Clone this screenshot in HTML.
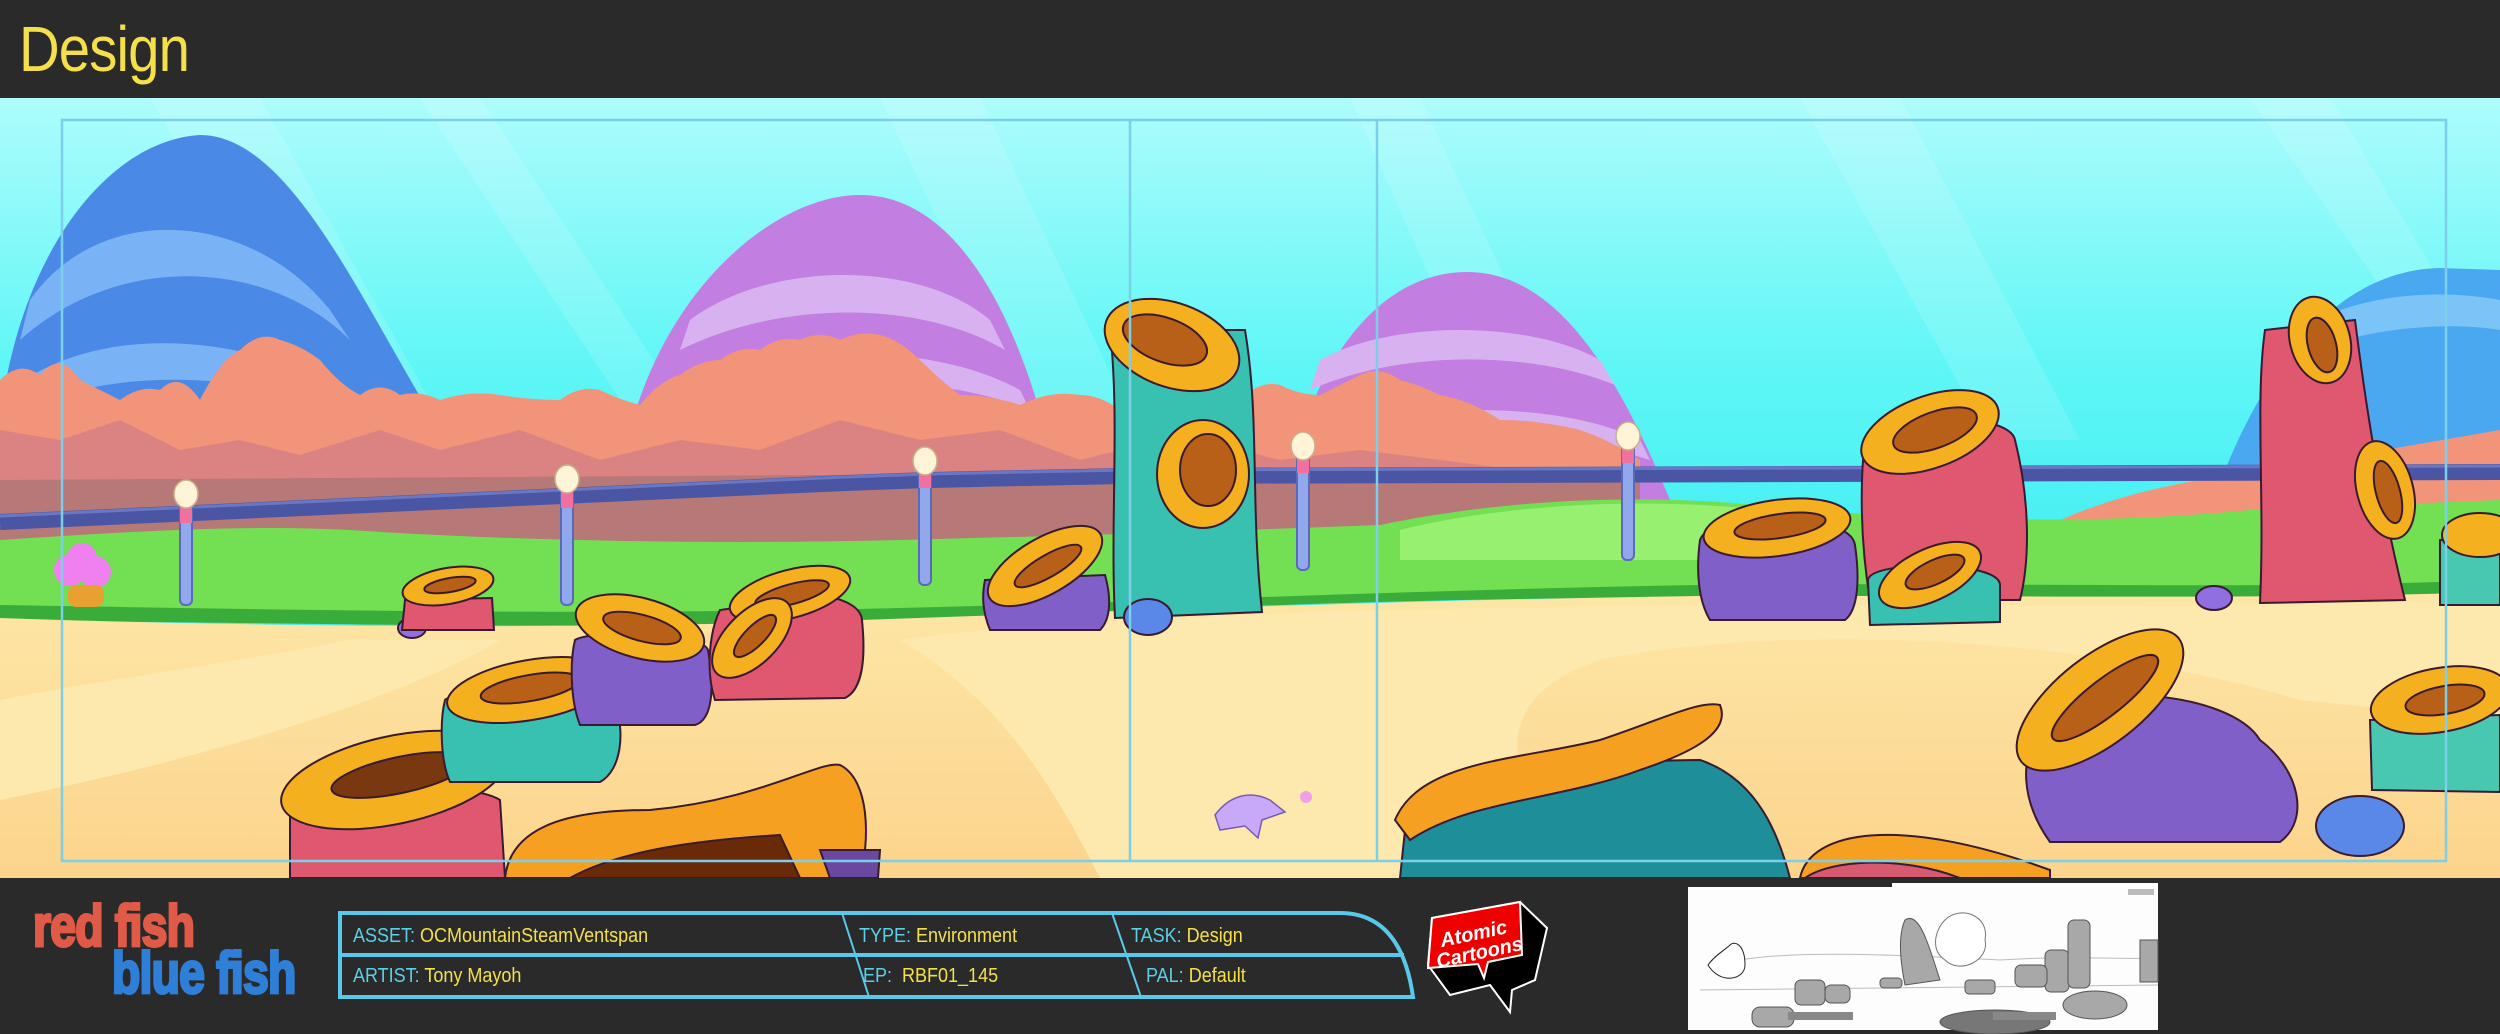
<!DOCTYPE html>
<html><head><meta charset="utf-8"><style>
html,body{margin:0;padding:0;background:#2a2a2a;}
body{width:2500px;height:1034px;position:relative;overflow:hidden;font-family:"Liberation Sans",sans-serif;}
.top{position:absolute;left:0;top:0;width:2500px;height:98px;background:#2a2a2a;}
.top span{position:absolute;left:19px;top:12px;font-size:64px;color:#f5e04a;letter-spacing:-1px;transform:scaleX(0.88);transform-origin:left;}
svg{position:absolute;left:0;}
.lbl{position:absolute;font-size:20px;color:#f5e04a;white-space:nowrap;transform:scaleX(0.9);transform-origin:left;}
.lbl b{color:#5ccfe8;font-weight:normal;}
.logo{position:absolute;font-weight:bold;font-size:58px;transform:scaleX(0.8);transform-origin:left;letter-spacing:-1px;-webkit-text-stroke:3px currentColor;}
</style></head><body>
<div class="top"><span>Design</span></div>

<svg style="top:98px" width="2500" height="780" viewBox="0 98 2500 780">
<defs>
<linearGradient id="sky" x1="0" y1="0" x2="0" y2="1">
<stop offset="0" stop-color="#aefcfc"/><stop offset="0.35" stop-color="#5ef6f6"/><stop offset="0.6" stop-color="#44eef2"/><stop offset="1" stop-color="#6cd6f0"/></linearGradient>
<linearGradient id="sand" x1="0" y1="0" x2="0" y2="1"><stop offset="0" stop-color="#fde6a6"/><stop offset="1" stop-color="#fcd48c"/></linearGradient>
</defs>
<rect x="0" y="98" width="2500" height="780" fill="url(#sky)"/>
<g fill="#ffffff" opacity="0.13">
<polygon points="150,98 260,98 520,560 420,560"/>
<polygon points="420,98 480,98 760,520 700,520"/>
<polygon points="880,98 980,98 1180,520 1080,520"/>
<polygon points="1350,98 1420,98 1600,480 1520,480"/>
<polygon points="1800,98 1900,98 2080,440 1990,440"/>
<polygon points="2250,98 2330,98 2500,380 2500,460"/>
</g>
<!-- mountains -->
<path d="M0,420 C20,250 110,140 200,135 C290,135 360,300 440,430 L0,430Z" fill="#4a8ae6"/>
<path d="M30,300 C100,200 250,210 330,310 L350,340 C270,260 120,250 20,340Z" fill="#7ab2f6"/>
<path d="M10,390 C100,320 260,330 380,410 L390,430 C270,370 110,360 0,420Z" fill="#7ab2f6"/>
<path d="M630,430 C670,280 780,195 860,195 C950,195 1010,300 1045,430Z" fill="#c27ee0"/>
<path d="M690,320 C770,260 920,260 990,320 L1005,350 C920,300 780,300 680,350Z" fill="#d8b2f0"/>
<path d="M660,395 C760,340 930,340 1020,390 L1030,410 C930,370 760,370 650,420Z" fill="#d8b2f0"/>
<path d="M1285,500 C1310,360 1380,272 1467,272 C1560,272 1620,380 1670,500Z" fill="#c27ee0"/>
<path d="M1320,360 C1390,320 1530,320 1600,360 L1615,385 C1530,350 1400,350 1310,390Z" fill="#d8b2f0"/>
<path d="M1300,440 C1400,400 1560,400 1640,440 L1650,460 C1560,430 1400,430 1295,470Z" fill="#d8b2f0"/>
<path d="M2225,470 C2270,360 2340,270 2440,268 L2500,270 L2500,470Z" fill="#4aa8f0"/>
<path d="M2300,330 C2360,290 2450,290 2500,300 L2500,330 C2440,320 2350,330 2290,360Z" fill="#7ac4f8"/>
<!-- trees -->
<path d="M0,380 Q20,360 40,375 Q60,350 80,380 Q100,390 120,400 Q140,385 160,390 Q180,370 200,400 Q220,360 240,350 Q260,330 280,340 Q300,345 320,360 Q340,385 360,395 Q380,380 400,395 Q420,390 440,400 Q470,390 500,395 Q530,400 560,400 Q580,385 600,390 Q620,400 640,405 Q660,380 680,375 Q700,360 720,360 Q740,345 760,350 Q780,335 800,340 Q820,330 840,340 Q860,330 880,335 Q900,340 920,360 Q940,380 960,395 Q990,395 1020,405 Q1050,390 1080,395 Q1100,395 1120,410 L1240,400 Q1260,380 1280,385 Q1300,395 1320,395 Q1340,385 1360,375 Q1380,365 1400,380 Q1420,385 1440,395 Q1470,400 1500,420 Q1540,420 1580,430 Q1610,440 1640,460 L1640,550 L0,560Z" fill="#f2947a"/>
<path d="M0,430 L60,440 120,420 180,450 240,440 300,455 380,430 440,450 520,430 600,460 680,440 760,450 840,420 920,440 1000,430 1080,460 1120,450 1200,440 1280,460 1360,450 1440,460 1520,470 1640,480 1640,560 0,560Z" fill="#d07c86" opacity="0.7"/>
<path d="M0,480 L1640,470 1640,560 0,565Z" fill="#b77878"/>
<path d="M2050,525 C2100,500 2180,480 2240,475 L2500,430 2500,540 2050,540Z" fill="#f2947a"/>
<!-- pipe -->
<path d="M0,522 C300,510 600,495 800,485 C950,478 1050,478 1120,476 L2500,472" stroke="#4a56a4" stroke-width="16" fill="none"/>
<path d="M0,516 C300,504 600,489 800,479 C950,472 1050,472 1120,470 L2500,466" stroke="#6a78c4" stroke-width="3" fill="none"/>
<!-- grass -->
<path d="M0,540 C150,530 250,525 350,530 C500,540 700,545 900,540 C1100,535 1250,530 1380,525 C1500,500 1650,490 1800,510 C1950,520 2100,525 2250,510 L2500,500 L2500,590 L2200,600 C1900,610 1700,590 1500,590 C1300,595 1100,610 900,615 C700,620 400,615 200,615 L0,612Z" fill="#72e052"/>
<path d="M1400,530 C1500,505 1650,495 1780,512 L1780,560 1400,560Z" fill="#98f070"/>
<path d="M0,605 C200,608 500,615 800,610 C1100,605 1400,590 1700,585 C2000,582 2250,590 2500,580 L2500,600 C2200,605 1900,600 1600,598 C1300,600 1000,618 700,625 C400,628 200,620 0,622Z" fill="#3aac3a"/>
<!-- sand -->
<path d="M0,618 C200,625 500,630 800,622 C1100,612 1400,600 1700,596 C2000,595 2250,600 2500,592 L2500,878 L0,878Z" fill="url(#sand)"/>
<path d="M900,640 C1000,700 1050,780 1100,878 L1600,878 C1500,790 1480,700 1600,660 C1800,620 2100,640 2300,700 L2500,720 L2500,600 C2200,610 1800,600 1400,610 C1200,615 1000,625 900,640Z" fill="#fde9ad"/>
<path d="M0,700 C100,680 250,660 350,640 L500,640 C400,700 200,760 0,800Z" fill="#fde9ad"/>
<!-- posts -->
<g fill="#92a8ec" stroke="#5a6ab8" stroke-width="2">
<rect x="180" y="505" width="12" height="100" rx="5"/><rect x="561" y="490" width="12" height="115" rx="5"/><rect x="919" y="470" width="12" height="115" rx="5"/><rect x="1297" y="455" width="12" height="115" rx="5"/><rect x="1622" y="445" width="12" height="115" rx="5"/>
</g>
<g fill="#f070a0"><rect x="180" y="505" width="12" height="18"/><rect x="561" y="490" width="12" height="18"/><rect x="919" y="470" width="12" height="18"/><rect x="1297" y="455" width="12" height="18"/><rect x="1622" y="445" width="12" height="18"/></g>
<g fill="#fff4d8" stroke="#c8b088" stroke-width="1.5">
<ellipse cx="186" cy="494" rx="12" ry="14"/><ellipse cx="567" cy="479" rx="12" ry="14"/><ellipse cx="925" cy="461" rx="12" ry="14"/><ellipse cx="1303" cy="446" rx="12" ry="14"/><ellipse cx="1628" cy="436" rx="12" ry="14"/>
</g>
<!-- flower -->
<g fill="#f080f0"><circle cx="70" cy="570" r="16"/><circle cx="95" cy="572" r="16"/><circle cx="82" cy="558" r="15"/></g>
<rect x="68" y="585" width="36" height="22" rx="8" fill="#e8a030"/>
<!-- corals -->
<g stroke="#3a1a30" stroke-width="2">
<path d="M1110,330 L1245,330 C1260,420 1250,500 1262,612 L1115,618 C1110,520 1120,420 1110,330Z" fill="#38c0b0"/>
<ellipse cx="1172" cy="345" rx="70" ry="42" transform="rotate(20 1172 345)" fill="#f5b020"/>
<ellipse cx="1165" cy="340" rx="44" ry="22" transform="rotate(20 1165 340)" fill="#b86018"/>
<ellipse cx="1203" cy="474" rx="46" ry="54" fill="#f5b020"/>
<ellipse cx="1208" cy="470" rx="28" ry="36" fill="#b86018"/>
<path d="M2265,330 L2355,320 C2365,400 2380,500 2405,600 L2260,603 C2265,500 2255,400 2265,330Z" fill="#e05870"/>
<ellipse cx="2320" cy="340" rx="30" ry="44" transform="rotate(-15 2320 340)" fill="#f5b020"/>
<ellipse cx="2322" cy="345" rx="14" ry="28" transform="rotate(-15 2322 345)" fill="#b86018"/>
<ellipse cx="2385" cy="490" rx="28" ry="50" transform="rotate(-15 2385 490)" fill="#f5b020"/>
<ellipse cx="2388" cy="492" rx="12" ry="32" transform="rotate(-15 2388 492)" fill="#b86018"/>
<path d="M1865,440 C1870,410 2010,410 2015,440 C2030,500 2030,560 2020,600 L1870,600 C1860,540 1860,480 1865,440Z" fill="#e05870"/>
<ellipse cx="1930" cy="432" rx="72" ry="36" transform="rotate(-20 1930 432)" fill="#f5b020"/>
<ellipse cx="1935" cy="430" rx="44" ry="18" transform="rotate(-20 1935 430)" fill="#b86018"/>
<path d="M1700,540 C1710,510 1850,510 1855,545 C1860,580 1858,610 1845,620 L1710,620 C1698,600 1696,570 1700,540Z" fill="#8060c8"/>
<ellipse cx="1777" cy="528" rx="74" ry="28" transform="rotate(-8 1777 528)" fill="#f5b020"/>
<ellipse cx="1780" cy="526" rx="46" ry="12" transform="rotate(-8 1780 526)" fill="#b86018"/>
<path d="M1868,580 C1870,560 2000,560 2000,585 L2000,622 L1870,625Z" fill="#38c0b0"/>
<ellipse cx="1930" cy="575" rx="55" ry="26" transform="rotate(-25 1930 575)" fill="#f5b020"/>
<ellipse cx="1935" cy="572" rx="32" ry="12" transform="rotate(-25 1935 572)" fill="#b86018"/>
<path d="M2040,720 C2080,680 2230,690 2260,740 C2300,770 2310,820 2280,842 L2050,842 C2020,800 2020,760 2040,720Z" fill="#8060c8"/>
<ellipse cx="2100" cy="700" rx="100" ry="44" transform="rotate(-38 2100 700)" fill="#f5b020"/>
<ellipse cx="2105" cy="698" rx="66" ry="18" transform="rotate(-38 2105 698)" fill="#b86018"/>
<path d="M2370,720 L2500,715 L2500,792 L2372,790Z" fill="#48c8b0"/>
<ellipse cx="2440" cy="700" rx="70" ry="32" transform="rotate(-10 2440 700)" fill="#f5b020"/>
<ellipse cx="2445" cy="700" rx="40" ry="14" transform="rotate(-10 2445 700)" fill="#b86018"/>
<path d="M2440,540 L2500,535 L2500,605 L2440,605Z" fill="#48c8b0"/>
<ellipse cx="2480" cy="535" rx="38" ry="22" fill="#f5b020"/>
<ellipse cx="2360" cy="826" rx="44" ry="30" fill="#5a88e8"/>
<ellipse cx="1148" cy="617" rx="24" ry="18" fill="#5a88e8"/>
<ellipse cx="2214" cy="598" rx="18" ry="12" fill="#9070e0"/>
<ellipse cx="412" cy="628" rx="14" ry="10" fill="#9070e0"/>
<path d="M1405,830 C1450,780 1600,760 1700,760 C1760,780 1780,840 1790,878 L1400,878Z" fill="#1e8e98"/>
<path d="M1395,820 C1420,760 1520,760 1600,740 C1660,720 1700,700 1720,705 C1730,730 1700,750 1640,770 C1560,800 1470,800 1410,840Z" fill="#f5a020"/>
<path d="M1800,878 C1810,830 1900,815 2050,870 L2050,878Z" fill="#f5a020"/>
<path d="M1805,878 C1830,860 1900,855 1960,878Z" fill="#d85a70"/>
<path d="M290,800 C300,780 470,780 500,800 L505,878 L290,878Z" fill="#e05870"/>
<ellipse cx="394" cy="780" rx="115" ry="44" transform="rotate(-12 394 780)" fill="#f5b020"/>
<ellipse cx="400" cy="775" rx="70" ry="18" transform="rotate(-12 400 775)" fill="#7a3810"/>
<path d="M505,878 C510,830 560,810 650,810 C760,800 820,760 840,765 C870,780 870,840 860,878Z" fill="#f5a020"/>
<path d="M570,878 C620,850 700,840 780,835 L800,878Z" fill="#6a2a08"/>
<path d="M820,850 L880,850 L878,878 L830,878Z" fill="#6a48a0"/>
<path d="M445,700 C450,690 600,690 615,705 C625,730 622,770 600,782 L450,782 C440,760 440,720 445,700Z" fill="#38c0b0"/>
<ellipse cx="530" cy="690" rx="84" ry="30" transform="rotate(-10 530 690)" fill="#f5b020"/>
<ellipse cx="530" cy="688" rx="50" ry="13" transform="rotate(-10 530 688)" fill="#b86018"/>
<path d="M575,640 C590,630 700,630 708,650 C715,690 712,720 695,725 L580,725 C570,700 570,660 575,640Z" fill="#8060c8"/>
<ellipse cx="640" cy="628" rx="66" ry="30" transform="rotate(15 640 628)" fill="#f5b020"/>
<ellipse cx="642" cy="628" rx="40" ry="13" transform="rotate(15 642 628)" fill="#b86018"/>
<path d="M790,600 C800,590 860,595 862,620 C866,660 862,690 845,698 L715,700 C705,670 710,630 720,610Z" fill="#e05870"/>
<ellipse cx="790" cy="594" rx="62" ry="24" transform="rotate(-15 790 594)" fill="#f5b020"/>
<ellipse cx="792" cy="594" rx="38" ry="10" transform="rotate(-15 792 594)" fill="#b86018"/>
<ellipse cx="752" cy="638" rx="50" ry="26" transform="rotate(-45 752 638)" fill="#f5b020"/>
<ellipse cx="755" cy="636" rx="28" ry="10" transform="rotate(-45 755 636)" fill="#b86018"/>
<path d="M405,600 L492,598 L494,630 L402,630Z" fill="#e05870"/>
<ellipse cx="448" cy="586" rx="46" ry="18" transform="rotate(-10 448 586)" fill="#f5b020"/>
<ellipse cx="450" cy="585" rx="26" ry="7" transform="rotate(-10 450 585)" fill="#b86018"/>
<path d="M985,580 L1105,575 C1112,600 1110,620 1100,630 L990,630 C982,610 982,595 985,580Z" fill="#8060c8"/>
<ellipse cx="1045" cy="566" rx="64" ry="28" transform="rotate(-30 1045 566)" fill="#f5b020"/>
<ellipse cx="1048" cy="566" rx="38" ry="11" transform="rotate(-30 1048 566)" fill="#b86018"/>
</g>
<path d="M1215,815 C1230,795 1250,790 1270,800 L1285,812 L1262,820 L1258,838 L1245,826 L1220,830Z" fill="#c8a8f8" stroke="#7a5ab0" stroke-width="1.5"/>
<circle cx="1306" cy="797" r="6" fill="#f0a0e8"/>
<g stroke="#7ccfe8" fill="none" stroke-width="2.5">
<rect x="62" y="120" width="2384" height="741"/>
<line x1="1130" y1="120" x2="1130" y2="861"/><line x1="1377" y1="120" x2="1377" y2="861"/>
</g>
</svg>

<div class="logo" style="left:33px;top:893px;color:#e05a48;">red fish</div>
<div class="logo" style="left:112px;top:940px;color:#2f7fd8;">blue fish</div>

<svg style="top:0" width="2500" height="1034" viewBox="0 0 2500 1034">
<g fill="none" stroke="#5ac8e8">
<path d="M340,913 L1340,913 C1380,913 1405,940 1413,997 L340,997 Z" stroke-width="4"/>
<line x1="340" y1="955" x2="1404" y2="955" stroke-width="4"/>
<line x1="842" y1="913" x2="869" y2="997" stroke-width="2"/>
<line x1="1112" y1="913" x2="1141" y2="997" stroke-width="2"/>
</g>
<path d="M1432,918 L1520,902 L1547,928 L1535,980 L1512,990 L1510,1012 L1490,985 L1450,995 L1428,965 Z" fill="#000" stroke="#fff" stroke-width="2"/>
<path d="M1432,918 L1520,902 L1522,955 L1488,962 L1484,978 L1478,964 L1428,968 Z" fill="#ee0000" stroke="#fff" stroke-width="2"/>
<text x="1440" y="940" font-family="Liberation Sans" font-weight="bold" font-style="italic" font-size="20" fill="#fff" transform="rotate(-12 1475 935)">Atomic</text>
<text x="1436" y="960" font-family="Liberation Sans" font-weight="bold" font-style="italic" font-size="20" fill="#fff" transform="rotate(-12 1475 955)">Cartoons</text>
<rect x="1688" y="887" width="470" height="143" fill="#fdfdfd"/>
<rect x="1688" y="883" width="200" height="4" fill="#2a2a2a"/>
<rect x="1892" y="883" width="266" height="4" fill="#fdfdfd"/>
<g stroke="#bbb" fill="none"><path d="M1700,990 L2158,985"/><path d="M1740,960 C1800,950 1900,955 2000,960 C2080,955 2120,960 2158,958"/></g>
<g fill="#a8a8a8" stroke="#555" stroke-width="1">
<rect x="1752" y="1007" width="42" height="20" rx="8"/><rect x="1795" y="980" width="30" height="25" rx="6"/>
<rect x="1825" y="985" width="25" height="18" rx="6"/><rect x="1880" y="978" width="22" height="10" rx="4"/>
<path d="M1905,920 C1920,910 1930,950 1940,980 L1905,985 C1900,960 1898,935 1905,920Z"/>
<rect x="1965" y="980" width="30" height="14" rx="4"/>
<rect x="2045" y="950" width="24" height="42" rx="6"/><rect x="2068" y="920" width="22" height="68" rx="6"/>
<rect x="2015" y="965" width="32" height="22" rx="6"/>
<ellipse cx="2095" cy="1005" rx="32" ry="14"/>
<rect x="2140" y="940" width="18" height="42"/>
<ellipse cx="1995" cy="1022" rx="55" ry="12" fill="#777"/>
</g>
<path d="M1945,920 C1960,905 1990,915 1985,940 C1990,960 1960,975 1945,960 C1930,950 1935,930 1945,920Z" fill="#fff" stroke="#777"/>
<path d="M1708,965 C1715,955 1725,950 1730,945 C1735,940 1745,945 1745,965 C1745,980 1720,985 1708,965Z" fill="#fff" stroke="#222"/>
<rect x="1788" y="1012" width="65" height="8" fill="#888"/><rect x="1993" y="1012" width="63" height="8" fill="#888"/>
<rect x="2128" y="889" width="26" height="6" fill="#bbb"/>
</svg>

<div class="lbl" style="left:353px;top:925px;"><b>ASSET:</b> OCMountainSteamVentspan</div>
<div class="lbl" style="left:859px;top:925px;"><b>TYPE:</b> Environment</div>
<div class="lbl" style="left:1131px;top:925px;"><b>TASK:</b> Design</div>
<div class="lbl" style="left:353px;top:965px;"><b>ARTIST:</b> Tony Mayoh</div>
<div class="lbl" style="left:863px;top:965px;"><b>EP:</b>&nbsp; RBF01_145</div>
<div class="lbl" style="left:1146px;top:965px;"><b>PAL:</b> Default</div>
</body></html>
